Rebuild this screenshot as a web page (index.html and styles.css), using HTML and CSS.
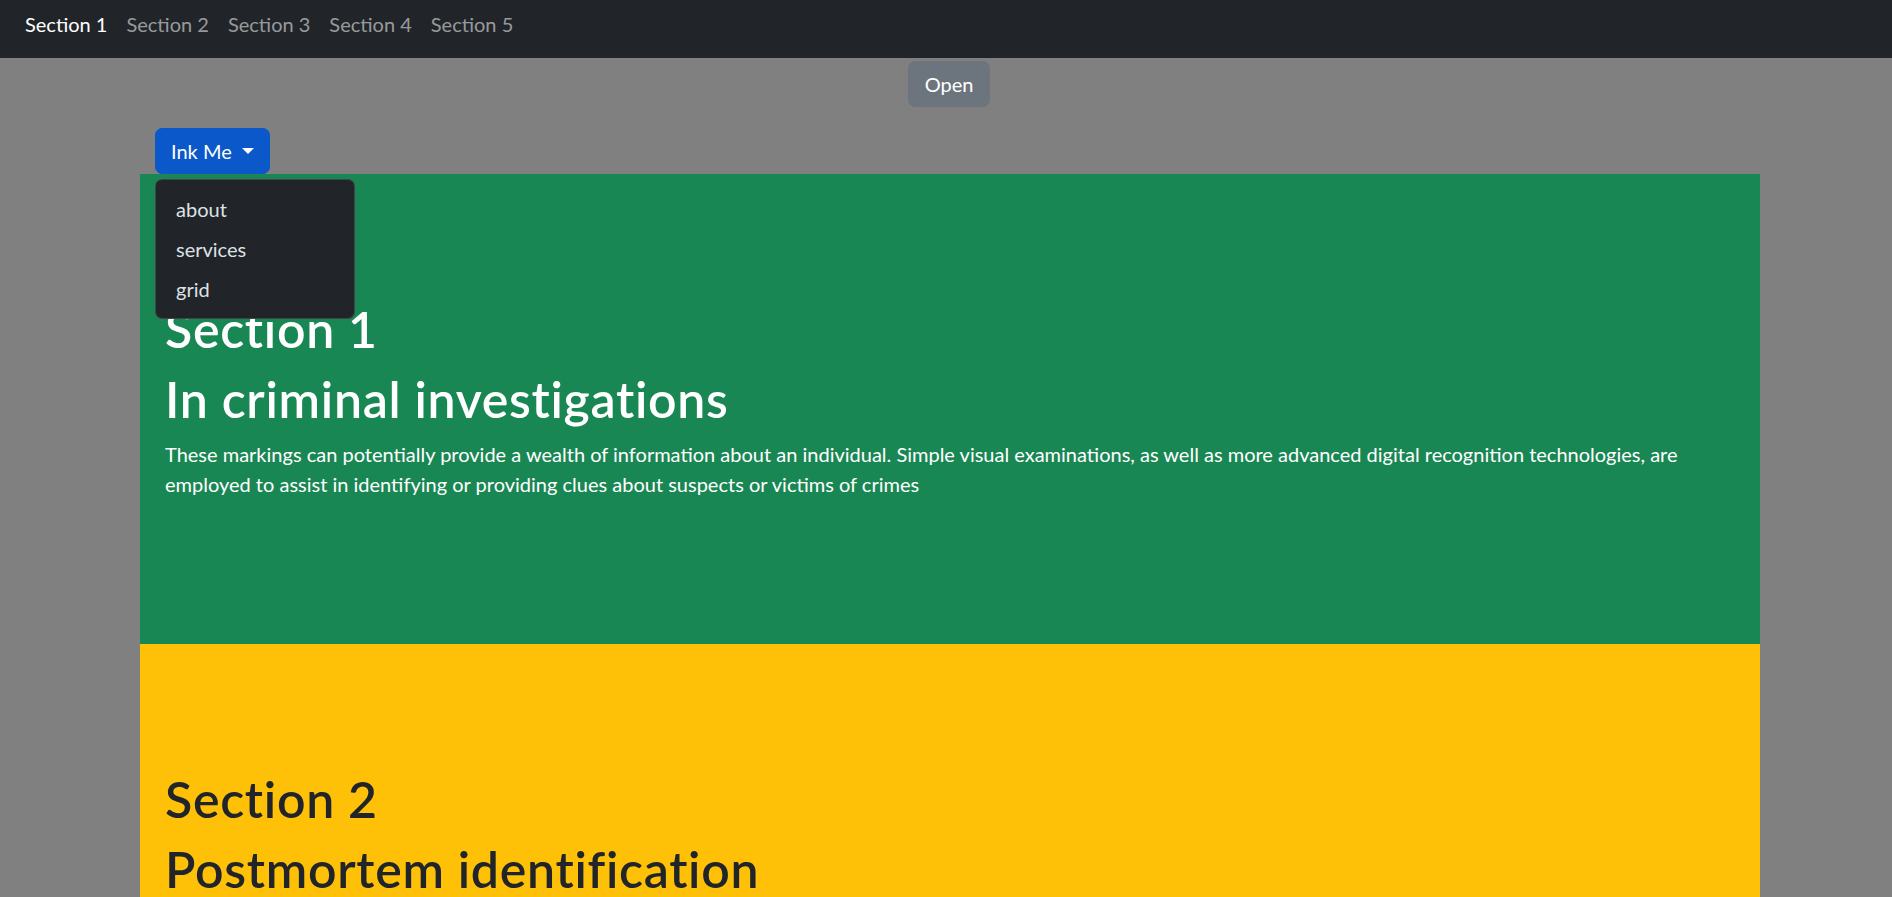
FILE: index.html
```html
<!DOCTYPE html>
<html lang="en">
<head>
<meta charset="utf-8">
<title>Sections</title>
<link rel="stylesheet" href="styles.css">
</head>
<body>
<nav class="topnav">
  <a class="nav-link active" href="#s1">Section 1</a>
  <a class="nav-link" href="#s2">Section 2</a>
  <a class="nav-link" href="#s3">Section 3</a>
  <a class="nav-link" href="#s4">Section 4</a>
  <a class="nav-link" href="#s5">Section 5</a>
</nav>
<div class="open-row">
  <button class="btn btn-secondary" type="button">Open</button>
</div>
<main class="content">
  <div class="dropdown">
    <button class="btn btn-primary dropdown-toggle" type="button">Ink Me</button>
    <ul class="dropdown-menu">
      <li><a class="dropdown-item" href="#about">about</a></li>
      <li><a class="dropdown-item" href="#services">services</a></li>
      <li><a class="dropdown-item" href="#grid">grid</a></li>
    </ul>
  </div>
  <section class="panel panel-green" id="s1">
    <h1 class="panel-title">Section 1</h1>
    <h1 class="panel-title">In criminal investigations</h1>
    <p class="panel-text">These markings can potentially provide a wealth of information about an individual. Simple visual examinations, as well as more advanced digital recognition technologies, are employed to assist in identifying or providing clues about suspects or victims of crimes</p>
  </section>
  <section class="panel panel-yellow" id="s2">
    <h1 class="panel-title">Section 2</h1>
    <h1 class="panel-title">Postmortem identification</h1>
    <p class="panel-text">Distinctive markings on the skin can help identify a deceased person when other means of identification are not available.</p>
  </section>
</main>
</body>
</html>
```
FILE: styles.css
```css
* { box-sizing: border-box; }

html, body {
  margin: 0;
  padding: 0;
}

body {
  background: #808080;
  font-family: Lato, "Open Sans", "Liberation Sans", sans-serif;
  font-size: 20px;
  line-height: 30px;
  color: #212529;
}

.topnav {
  display: flex;
  align-items: center;
  gap: 19px;
  height: 58px;
  padding: 9px 25px 19px;
  background: #212529;
}

.nav-link {
  color: rgba(255, 255, 255, 0.55);
  text-decoration: none;
  line-height: 30px;
  white-space: nowrap;
}

.nav-link.active {
  color: #fff;
}

.open-row {
  display: flex;
  justify-content: center;
  padding: 3px 0 0 6px;
}

.btn {
  font-family: inherit;
  font-size: 20px;
  line-height: 30px;
  padding: 7px 15px;
  border: 1px solid transparent;
  border-radius: 7px;
  color: #fff;
  cursor: pointer;
}

.btn-secondary {
  background: #6c757d;
  border-color: #6c757d;
  padding-left: 16px;
  padding-right: 16px;
}

.btn-primary {
  background: #0a58ca;
  border-color: #0a58ca;
}

.dropdown-toggle::after {
  content: "";
  display: inline-block;
  margin-left: 10px;
  vertical-align: 5px;
  border-top: 6px solid #fff;
  border-left: 6px solid transparent;
  border-right: 6px solid transparent;
}

.content {
  margin: 21px 132px 0 140px;
}

.dropdown {
  position: relative;
  display: inline-block;
  margin-left: 15px;
  vertical-align: top;
}

.dropdown-toggle {
  display: block;
}

.dropdown-menu {
  position: absolute;
  top: calc(100% + 5px);
  left: 0;
  z-index: 10;
  width: 200px;
  margin: 0;
  padding: 9px 0;
  list-style: none;
  background: #212529;
  border: 1px solid rgba(255, 255, 255, 0.15);
  border-radius: 7px;
}

.dropdown-item {
  display: block;
  padding: 5px 20px;
  color: #dee2e6;
  text-decoration: none;
  line-height: 30px;
}

.panel {
  display: block;
  padding: 125px 25px;
}

.panel-green {
  background: #198754;
  color: #fff;
}

.panel-yellow {
  background: #ffc107;
  color: #212529;
}

.panel-title {
  margin: 0 0 10px;
  font-size: 50px;
  line-height: 60px;
  font-weight: 600;
  letter-spacing: 0.7px;
}

.panel-text {
  margin: 0 0 20px;
}
```
